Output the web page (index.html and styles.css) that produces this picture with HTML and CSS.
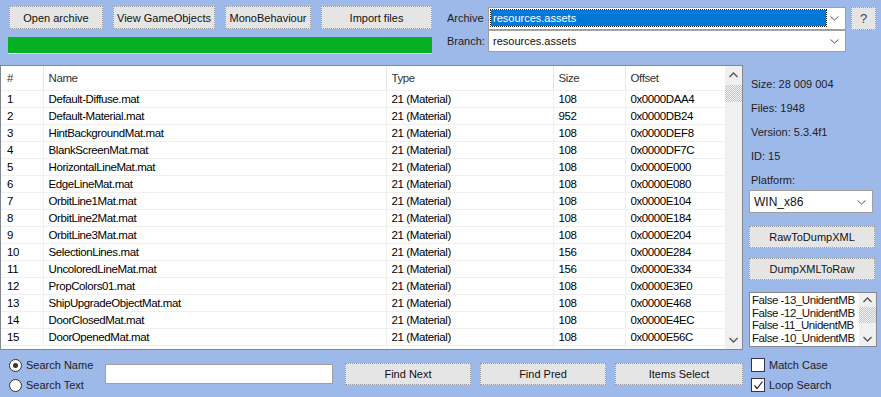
FILE: index.html
```html
<!DOCTYPE html>
<html lang="en">

<head>
    <meta charset="UTF-8">
    <title>Unity Assets Explorer</title>
    <link rel="stylesheet" href="styles.css">
</head>

<body>
    <!-- Top toolbar -->
    <div class="topbar">
        <div class="top-left">
            <div class="btn-row">
                <button class="btn" style="width: 94px">Open archive</button>
                <button class="btn" style="width: 102px">View GameObjects</button>
                <button class="btn" style="width: 86px">MonoBehaviour</button>
                <button class="btn" style="width: 111px">Import files</button>
            </div>
            <div class="progress"></div>
        </div>

        <div class="top-right">
            <div class="field-row">
                <span class="field-label">Archive</span>
                <div class="combo combo-archive">
                    <span class="combo-sel">resources.assets</span>
                    <svg class="chev" width="9" height="5" viewBox="0 0 9 5"><polyline points="0.5,0.5 4.5,4 8.5,0.5" fill="none" stroke="#555" /></svg>
                </div>
                <button class="btn help-btn">?</button>
            </div>
            <div class="field-row">
                <span class="field-label">Branch:</span>
                <div class="combo combo-branch">
                    <span class="combo-text">resources.assets</span>
                    <svg class="chev" width="9" height="5" viewBox="0 0 9 5"><polyline points="0.5,0.5 4.5,4 8.5,0.5" fill="none" stroke="#555" /></svg>
                </div>
            </div>
        </div>
    </div>

    <!-- File list + info panel -->
    <div class="main">
        <div class="listview">
            <table class="files">
                <colgroup>
                    <col style="width: 42px">
                    <col style="width: 343px">
                    <col style="width: 167px">
                    <col style="width: 72px">
                    <col>
                </colgroup>
                <thead>
                    <tr><th>#</th><th>Name</th><th>Type</th><th>Size</th><th>Offset</th></tr>
                </thead>
                <tbody>
                    <tr><td>1</td><td>Default-Diffuse.mat</td><td>21 (Material)</td><td>108</td><td>0x0000DAA4</td></tr>
                    <tr><td>2</td><td>Default-Material.mat</td><td>21 (Material)</td><td>952</td><td>0x0000DB24</td></tr>
                    <tr><td>3</td><td>HintBackgroundMat.mat</td><td>21 (Material)</td><td>108</td><td>0x0000DEF8</td></tr>
                    <tr><td>4</td><td>BlankScreenMat.mat</td><td>21 (Material)</td><td>108</td><td>0x0000DF7C</td></tr>
                    <tr><td>5</td><td>HorizontalLineMat.mat</td><td>21 (Material)</td><td>108</td><td>0x0000E000</td></tr>
                    <tr><td>6</td><td>EdgeLineMat.mat</td><td>21 (Material)</td><td>108</td><td>0x0000E080</td></tr>
                    <tr><td>7</td><td>OrbitLine1Mat.mat</td><td>21 (Material)</td><td>108</td><td>0x0000E104</td></tr>
                    <tr><td>8</td><td>OrbitLine2Mat.mat</td><td>21 (Material)</td><td>108</td><td>0x0000E184</td></tr>
                    <tr><td>9</td><td>OrbitLine3Mat.mat</td><td>21 (Material)</td><td>108</td><td>0x0000E204</td></tr>
                    <tr><td>10</td><td>SelectionLines.mat</td><td>21 (Material)</td><td>156</td><td>0x0000E284</td></tr>
                    <tr><td>11</td><td>UncoloredLineMat.mat</td><td>21 (Material)</td><td>156</td><td>0x0000E334</td></tr>
                    <tr><td>12</td><td>PropColors01.mat</td><td>21 (Material)</td><td>108</td><td>0x0000E3E0</td></tr>
                    <tr><td>13</td><td>ShipUpgradeObjectMat.mat</td><td>21 (Material)</td><td>108</td><td>0x0000E468</td></tr>
                    <tr><td>14</td><td>DoorClosedMat.mat</td><td>21 (Material)</td><td>108</td><td>0x0000E4EC</td></tr>
                    <tr><td>15</td><td>DoorOpenedMat.mat</td><td>21 (Material)</td><td>108</td><td>0x0000E56C</td></tr>
                    <tr class="partial"><td></td><td></td><td></td><td></td><td></td></tr>
                </tbody>
            </table>
            <div class="vscroll">
                <svg class="arrow" width="9" height="6" viewBox="0 0 9 6"><polyline points="0.5,5 4.5,1 8.5,5" fill="none" stroke="#555" stroke-width="1.3" /></svg>
                <div class="thumb"></div>
                <div class="track"></div>
                <svg class="arrow" width="9" height="6" viewBox="0 0 9 6"><polyline points="0.5,1 4.5,5 8.5,1" fill="none" stroke="#555" stroke-width="1.3" /></svg>
            </div>
        </div>

        <div class="info">
            <div class="info-line">Size: 28 009 004</div>
            <div class="info-line">Files: 1948</div>
            <div class="info-line">Version: 5.3.4f1</div>
            <div class="info-line">ID: 15</div>
            <div class="info-line">Platform:</div>
            <div class="combo combo-platform">
                <span class="combo-text">WIN_x86</span>
                <svg class="chev" width="9" height="5" viewBox="0 0 9 5"><polyline points="0.5,0.5 4.5,4 8.5,0.5" fill="none" stroke="#555" /></svg>
            </div>
            <button class="btn side-btn first">RawToDumpXML</button>
            <button class="btn side-btn">DumpXMLToRaw</button>
            <div class="listbox">
                <div class="listbox-items">
                    <div>False -13_UnidentMB</div>
                    <div>False -12_UnidentMB</div>
                    <div>False -11_UnidentMB</div>
                    <div>False -10_UnidentMB</div>
                </div>
                <div class="vscroll small">
                    <svg class="arrow" width="9" height="6" viewBox="0 0 9 6"><polyline points="0.5,5 4.5,1 8.5,5" fill="none" stroke="#555" stroke-width="1.3" /></svg>
                    <div class="thumb"></div>
                    <div class="track"></div>
                    <svg class="arrow" width="9" height="6" viewBox="0 0 9 6"><polyline points="0.5,1 4.5,5 8.5,1" fill="none" stroke="#555" stroke-width="1.3" /></svg>
                </div>
            </div>
        </div>
    </div>

    <!-- Search bar -->
    <div class="search">
        <div class="radios">
            <label class="radio"><span class="dot checked"></span>Search Name</label>
            <label class="radio"><span class="dot"></span>Search Text</label>
        </div>
        <div class="search-input"></div>
        <button class="btn find-btn">Find Next</button>
        <button class="btn find-btn">Find Pred</button>
        <button class="btn find-btn wide">Items Select</button>
        <div class="checks">
            <label class="check"><span class="box"></span>Match Case</label>
            <label class="check"><span class="box"><svg width="11" height="11" viewBox="0 0 11 11"><polyline points="1.5,5.5 4,8.5 9.5,1.5" fill="none" stroke="#222" stroke-width="1.2" /></svg></span>Loop Search</label>
        </div>
    </div>
</body>

</html>
```

FILE: styles.css
```css
body {
    margin: 0;
    background-color: #9db9ea;
    font-family: "Liberation Sans", Arial, sans-serif;
    font-size: 11px;
    color: #111;
    width: 881px;
    height: 397px;
    overflow: hidden;
}

/* Buttons */
.btn {
    font-family: inherit;
    font-size: 11px;
    color: #111;
    background-color: #e5e5e5;
    border: 1px dotted #9a9a9a;
    height: 23px;
    padding: 0;
    margin: 0;
}

/* Top toolbar */
.topbar {
    display: flex;
    height: 65px;
}

.top-left {
    width: 424px;
    padding: 6px 0 0 8px;
}

.btn-row {
    display: flex;
    gap: 10px;
    padding-left: 1px;
}

.progress {
    margin-top: 8px;
    height: 16px;
    background-color: #06b025;
    border-bottom: 1px solid #e8f3e8;
}

.top-right {
    margin-left: 15px;
    padding-top: 6px;
}

.field-row {
    display: flex;
    align-items: center;
    height: 24px;
}

.field-row + .field-row {
    height: 22px;
}

.field-label {
    width: 41px;
    color: #222;
}

.combo {
    position: relative;
    display: flex;
    align-items: center;
    box-sizing: border-box;
    background-color: #fff;
    border: 1px solid #a0a0a0;
}

.combo .chev {
    position: absolute;
    right: 6px;
    top: 50%;
    margin-top: -2px;
}

.combo-archive,
.combo-branch {
    width: 358px;
    height: 23px;
}

.combo-branch {
    height: 22px;
}

.combo-sel {
    margin-left: 2px;
    width: 335px;
    height: 16px;
    line-height: 16px;
    padding-left: 2px;
    box-sizing: border-box;
    background-color: #0078d7;
    color: #fff;
    outline: 1px dotted #222;
}

.combo-text {
    padding-left: 4px;
}

.help-btn {
    width: 25px;
    margin-left: 5px;
    font-size: 13px;
    color: #444;
}

/* List view */
.main {
    display: flex;
    height: 285px;
}

.listview {
    display: flex;
    width: 743px;
    box-sizing: border-box;
    border: 1px solid #828790;
    background-color: #fff;
    overflow: hidden;
}

.files {
    width: 724px;
    table-layout: fixed;
    border-collapse: collapse;
    font-size: 11.5px;
    letter-spacing: -0.4px;
    color: #000;
}

.files th {
    height: 24px;
    font-weight: normal;
    text-align: left;
    padding: 0 0 0 5px;
    color: #333;
    border-left: 1px solid #e5e5e5;
    border-bottom: 1px solid #f0f0f0;
}

.files th:first-child,
.files td:first-child {
    border-left: none;
    padding-left: 6px;
}

.files td {
    height: 16px;
    padding: 0 0 0 5px;
    border-left: 1px solid #f0f0f0;
    border-bottom: 1px solid #f0f0f0;
    white-space: nowrap;
    overflow: hidden;
}

.vscroll {
    width: 17px;
    display: flex;
    flex-direction: column;
    align-items: center;
    background-color: #f0f0f0;
}

.vscroll .arrow {
    margin: 6px 0;
}

.vscroll .thumb {
    width: 17px;
    height: 17px;
    margin-top: 1px;
    background: repeating-conic-gradient(#b4c6e4 0 25%, #f4f4f4 0 50%) 0 0 / 2px 2px;
}

.vscroll .track {
    flex: 1;
}

/* Info panel */
.info {
    width: 128px;
    margin-left: 6px;
    padding-top: 13px;
}

.info-line {
    height: 24px;
    line-height: 13px;
    padding-left: 2px;
    color: #222;
}

.combo-platform {
    width: 124px;
    height: 23px;
    margin-top: -8px;
    font-size: 12px;
}

.side-btn {
    display: block;
    width: 126px;
    height: 22px;
    margin-top: 10px;
}

.side-btn.first {
    margin-top: 13px;
}

.listbox {
    display: flex;
    width: 128px;
    height: 55px;
    margin-top: 12px;
    box-sizing: border-box;
    border: 1px solid #828790;
    background-color: #fff;
}

.listbox-items {
    flex: 1;
    padding: 1px 0 0 2px;
    font-size: 11.5px;
    line-height: 12.5px;
    letter-spacing: -0.45px;
    white-space: nowrap;
    overflow: hidden;
}

.vscroll.small .arrow {
    margin: 4px 0;
}

.vscroll.small .thumb {
    height: 16px;
    margin-top: 0;
}

/* Search bar */
.search {
    display: flex;
    height: 47px;
}

.radios {
    width: 96px;
    padding: 5px 0 0 9px;
}

.radio,
.check {
    display: flex;
    align-items: center;
    height: 20px;
    color: #222;
}

.dot {
    position: relative;
    width: 11px;
    height: 11px;
    margin-right: 4px;
    border: 1px solid #333;
    border-radius: 50%;
    background-color: #fff;
}

.dot.checked::after {
    content: "";
    position: absolute;
    left: 3px;
    top: 3px;
    width: 5px;
    height: 5px;
    border-radius: 50%;
    background-color: #333;
}

.search-input {
    width: 228px;
    height: 20px;
    margin-top: 14px;
    box-sizing: border-box;
    border: 1px solid #a0a0a0;
    background-color: #fff;
}

.find-btn {
    width: 126px;
    height: 22px;
    margin: 13px 0 0 12px;
}

.find-btn + .find-btn {
    margin-left: 9px;
}

.find-btn.wide {
    width: 128px;
}

.checks {
    margin-left: 8px;
    padding-top: 5px;
}

.box {
    display: flex;
    align-items: center;
    justify-content: center;
    width: 12px;
    height: 12px;
    margin-right: 4px;
    border: 1px solid #3a3050;
    background-color: #fff;
}
```
